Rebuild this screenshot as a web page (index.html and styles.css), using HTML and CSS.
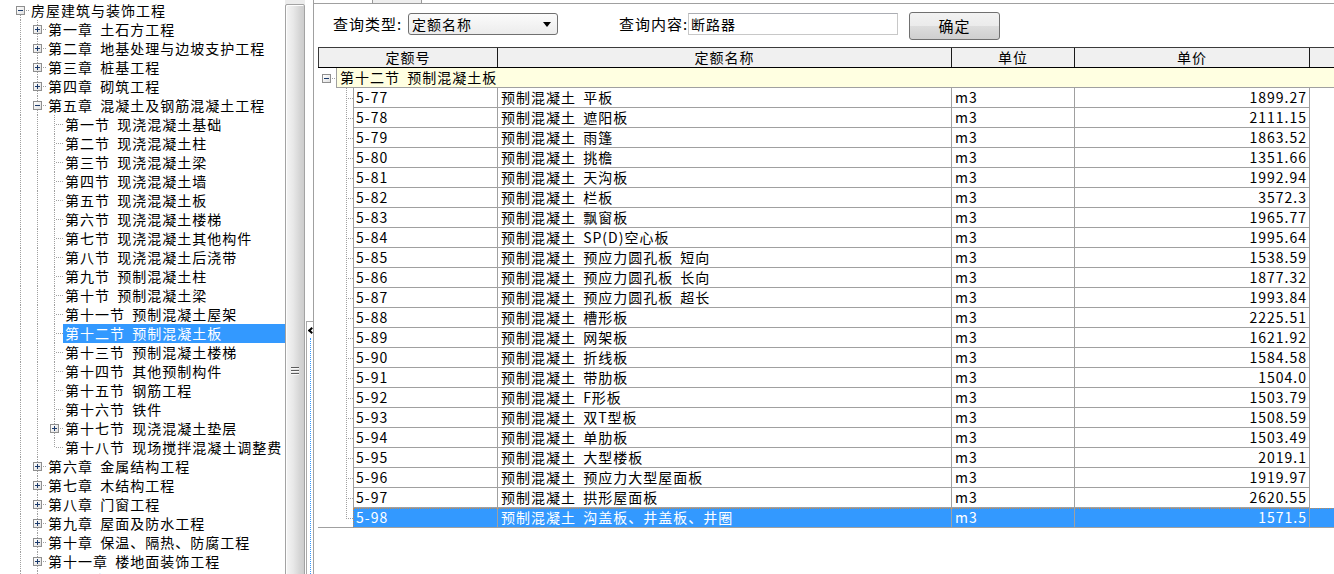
FILE: index.html
```html
<!DOCTYPE html>
<html lang="zh-CN">
<head>
<meta charset="utf-8">
<title>定额查询</title>
<link rel="stylesheet" href="styles.css">
</head>
<body>
<div class="app">
  <aside class="left">
    <div class="tree">
      <div class="row"><span class="ind root"><i class="exp minus"></i></span><span class="lbl">房屋建筑与装饰工程</span></div>
      <div class="row"><span class="ind v"></span><span class="ind tee"><i class="exp plus"></i></span><span class="lbl">第一章 土石方工程</span></div>
      <div class="row"><span class="ind v"></span><span class="ind tee"><i class="exp plus"></i></span><span class="lbl">第二章 地基处理与边坡支护工程</span></div>
      <div class="row"><span class="ind v"></span><span class="ind tee"><i class="exp plus"></i></span><span class="lbl">第三章 桩基工程</span></div>
      <div class="row"><span class="ind v"></span><span class="ind tee"><i class="exp plus"></i></span><span class="lbl">第四章 砌筑工程</span></div>
      <div class="row"><span class="ind v"></span><span class="ind tee"><i class="exp minus"></i></span><span class="lbl">第五章 混凝土及钢筋混凝土工程</span></div>
      <div class="row"><span class="ind v"></span><span class="ind v"></span><span class="ind tee"></span><span class="lbl">第一节 现浇混凝土基础</span></div>
      <div class="row"><span class="ind v"></span><span class="ind v"></span><span class="ind tee"></span><span class="lbl">第二节 现浇混凝土柱</span></div>
      <div class="row"><span class="ind v"></span><span class="ind v"></span><span class="ind tee"></span><span class="lbl">第三节 现浇混凝土梁</span></div>
      <div class="row"><span class="ind v"></span><span class="ind v"></span><span class="ind tee"></span><span class="lbl">第四节 现浇混凝土墙</span></div>
      <div class="row"><span class="ind v"></span><span class="ind v"></span><span class="ind tee"></span><span class="lbl">第五节 现浇混凝土板</span></div>
      <div class="row"><span class="ind v"></span><span class="ind v"></span><span class="ind tee"></span><span class="lbl">第六节 现浇混凝土楼梯</span></div>
      <div class="row"><span class="ind v"></span><span class="ind v"></span><span class="ind tee"></span><span class="lbl">第七节 现浇混凝土其他构件</span></div>
      <div class="row"><span class="ind v"></span><span class="ind v"></span><span class="ind tee"></span><span class="lbl">第八节 现浇混凝土后浇带</span></div>
      <div class="row"><span class="ind v"></span><span class="ind v"></span><span class="ind tee"></span><span class="lbl">第九节 预制混凝土柱</span></div>
      <div class="row"><span class="ind v"></span><span class="ind v"></span><span class="ind tee"></span><span class="lbl">第十节 预制混凝土梁</span></div>
      <div class="row"><span class="ind v"></span><span class="ind v"></span><span class="ind tee"></span><span class="lbl">第十一节 预制混凝土屋架</span></div>
      <div class="row sel"><span class="ind v"></span><span class="ind v"></span><span class="ind tee"></span><span class="lbl">第十二节 预制混凝土板</span></div>
      <div class="row"><span class="ind v"></span><span class="ind v"></span><span class="ind tee"></span><span class="lbl">第十三节 预制混凝土楼梯</span></div>
      <div class="row"><span class="ind v"></span><span class="ind v"></span><span class="ind tee"></span><span class="lbl">第十四节 其他预制构件</span></div>
      <div class="row"><span class="ind v"></span><span class="ind v"></span><span class="ind tee"></span><span class="lbl">第十五节 钢筋工程</span></div>
      <div class="row"><span class="ind v"></span><span class="ind v"></span><span class="ind tee"></span><span class="lbl">第十六节 铁件</span></div>
      <div class="row"><span class="ind v"></span><span class="ind v"></span><span class="ind tee"><i class="exp plus"></i></span><span class="lbl">第十七节 现浇混凝土垫层</span></div>
      <div class="row"><span class="ind v"></span><span class="ind v"></span><span class="ind elbow"></span><span class="lbl">第十八节 现场搅拌混凝土调整费</span></div>
      <div class="row"><span class="ind v"></span><span class="ind tee"><i class="exp plus"></i></span><span class="lbl">第六章 金属结构工程</span></div>
      <div class="row"><span class="ind v"></span><span class="ind tee"><i class="exp plus"></i></span><span class="lbl">第七章 木结构工程</span></div>
      <div class="row"><span class="ind v"></span><span class="ind tee"><i class="exp plus"></i></span><span class="lbl">第八章 门窗工程</span></div>
      <div class="row"><span class="ind v"></span><span class="ind tee"><i class="exp plus"></i></span><span class="lbl">第九章 屋面及防水工程</span></div>
      <div class="row"><span class="ind v"></span><span class="ind tee"><i class="exp plus"></i></span><span class="lbl">第十章 保温、隔热、防腐工程</span></div>
      <div class="row"><span class="ind v"></span><span class="ind tee"><i class="exp plus"></i></span><span class="lbl">第十一章 楼地面装饰工程</span></div>
      <div class="row"><span class="ind v"></span><span class="ind tee"><i class="exp plus"></i></span><span class="lbl">第十二章 墙、柱面装饰与隔断、幕墙工程</span></div>
    </div>
    <div class="vscroll"><div class="thumb"><span class="grip"></span></div></div>
  </aside>

  <div class="splitter"><div class="collapse"><span class="chev"></span><span class="dots"></span></div></div>

  <main class="right">
    <div class="topline"><span class="tabstub"></span></div>
    <div class="query">
      <span class="qlabel q1">查询类型:</span>
      <div class="combo"><span class="combo-text">定额名称</span><span class="arrow"></span></div>
      <span class="qlabel q2">查询内容:</span>
      <div class="input">断路器</div>
      <button class="btn">确定</button>
    </div>

    <div class="grid">
      <div class="ghead">
        <div class="hc first">定额号</div>
        <div class="hc">定额名称</div>
        <div class="hc">单位</div>
        <div class="hc">单价</div>
        <div class="hc last"></div>
      </div>
      <div class="grp"><span class="gind"><i class="exp minus"></i></span><span class="gcell">第十二节 预制混凝土板</span></div>

      <div class="dr"><span class="dind"></span><span class="c c1">5-77</span><span class="c c2">预制混凝土 平板</span><span class="c c3">m3</span><span class="c c4">1899.27</span><span class="c5"></span></div>
      <div class="dr"><span class="dind"></span><span class="c c1">5-78</span><span class="c c2">预制混凝土 遮阳板</span><span class="c c3">m3</span><span class="c c4">2111.15</span><span class="c5"></span></div>
      <div class="dr"><span class="dind"></span><span class="c c1">5-79</span><span class="c c2">预制混凝土 雨篷</span><span class="c c3">m3</span><span class="c c4">1863.52</span><span class="c5"></span></div>
      <div class="dr"><span class="dind"></span><span class="c c1">5-80</span><span class="c c2">预制混凝土 挑檐</span><span class="c c3">m3</span><span class="c c4">1351.66</span><span class="c5"></span></div>
      <div class="dr"><span class="dind"></span><span class="c c1">5-81</span><span class="c c2">预制混凝土 天沟板</span><span class="c c3">m3</span><span class="c c4">1992.94</span><span class="c5"></span></div>
      <div class="dr"><span class="dind"></span><span class="c c1">5-82</span><span class="c c2">预制混凝土 栏板</span><span class="c c3">m3</span><span class="c c4">3572.3</span><span class="c5"></span></div>
      <div class="dr"><span class="dind"></span><span class="c c1">5-83</span><span class="c c2">预制混凝土 飘窗板</span><span class="c c3">m3</span><span class="c c4">1965.77</span><span class="c5"></span></div>
      <div class="dr"><span class="dind"></span><span class="c c1">5-84</span><span class="c c2">预制混凝土 SP(D)空心板</span><span class="c c3">m3</span><span class="c c4">1995.64</span><span class="c5"></span></div>
      <div class="dr"><span class="dind"></span><span class="c c1">5-85</span><span class="c c2">预制混凝土 预应力圆孔板 短向</span><span class="c c3">m3</span><span class="c c4">1538.59</span><span class="c5"></span></div>
      <div class="dr"><span class="dind"></span><span class="c c1">5-86</span><span class="c c2">预制混凝土 预应力圆孔板 长向</span><span class="c c3">m3</span><span class="c c4">1877.32</span><span class="c5"></span></div>
      <div class="dr"><span class="dind"></span><span class="c c1">5-87</span><span class="c c2">预制混凝土 预应力圆孔板 超长</span><span class="c c3">m3</span><span class="c c4">1993.84</span><span class="c5"></span></div>
      <div class="dr"><span class="dind"></span><span class="c c1">5-88</span><span class="c c2">预制混凝土 槽形板</span><span class="c c3">m3</span><span class="c c4">2225.51</span><span class="c5"></span></div>
      <div class="dr"><span class="dind"></span><span class="c c1">5-89</span><span class="c c2">预制混凝土 网架板</span><span class="c c3">m3</span><span class="c c4">1621.92</span><span class="c5"></span></div>
      <div class="dr"><span class="dind"></span><span class="c c1">5-90</span><span class="c c2">预制混凝土 折线板</span><span class="c c3">m3</span><span class="c c4">1584.58</span><span class="c5"></span></div>
      <div class="dr"><span class="dind"></span><span class="c c1">5-91</span><span class="c c2">预制混凝土 带肋板</span><span class="c c3">m3</span><span class="c c4">1504.0</span><span class="c5"></span></div>
      <div class="dr"><span class="dind"></span><span class="c c1">5-92</span><span class="c c2">预制混凝土 F形板</span><span class="c c3">m3</span><span class="c c4">1503.79</span><span class="c5"></span></div>
      <div class="dr"><span class="dind"></span><span class="c c1">5-93</span><span class="c c2">预制混凝土 双T型板</span><span class="c c3">m3</span><span class="c c4">1508.59</span><span class="c5"></span></div>
      <div class="dr"><span class="dind"></span><span class="c c1">5-94</span><span class="c c2">预制混凝土 单肋板</span><span class="c c3">m3</span><span class="c c4">1503.49</span><span class="c5"></span></div>
      <div class="dr"><span class="dind"></span><span class="c c1">5-95</span><span class="c c2">预制混凝土 大型楼板</span><span class="c c3">m3</span><span class="c c4">2019.1</span><span class="c5"></span></div>
      <div class="dr"><span class="dind"></span><span class="c c1">5-96</span><span class="c c2">预制混凝土 预应力大型屋面板</span><span class="c c3">m3</span><span class="c c4">1919.97</span><span class="c5"></span></div>
      <div class="dr"><span class="dind"></span><span class="c c1">5-97</span><span class="c c2">预制混凝土 拱形屋面板</span><span class="c c3">m3</span><span class="c c4">2620.55</span><span class="c5"></span></div>
      <div class="dr sel last"><span class="dind"></span><span class="c c1">5-98</span><span class="c c2">预制混凝土 沟盖板、井盖板、井圈</span><span class="c c3">m3</span><span class="c c4">1571.5</span><span class="c5"></span></div>
    </div>
  </main>
</div>
</body>
</html>
```

FILE: styles.css
```css
* { box-sizing: border-box; }
html, body { margin: 0; padding: 0; }
body {
  font-family: "Noto Sans CJK SC", "Noto Sans", sans-serif;
  font-size: 14px;
  letter-spacing: 1px;
  word-spacing: 3px;
  color: #000;
  background: #fff;
  overflow: hidden;
}
.app { display: flex; width: 1334px; height: 574px; overflow: hidden; }

/* ---------- left tree ---------- */
.left { display: flex; width: 305px; flex: none; height: 574px; }
.tree { width: 285px; flex: none; padding: 1px 0 0 12px; overflow: hidden; }
.row { display: flex; height: 19px; }
.ind { flex: none; width: 17px; height: 19px; display: grid; place-items: center; }
.v {
  background: repeating-linear-gradient(to bottom, #a0a0a0 0 1px, transparent 1px 2px) 8px 0 / 1px 100% no-repeat;
}
.tee {
  background:
    repeating-linear-gradient(to bottom, #a0a0a0 0 1px, transparent 1px 2px) 8px 0 / 1px 100% no-repeat,
    repeating-linear-gradient(to right, #a0a0a0 0 1px, transparent 1px 2px) 10px 9px / 7px 1px no-repeat;
}
.elbow {
  background:
    repeating-linear-gradient(to bottom, #a0a0a0 0 1px, transparent 1px 2px) 8px 0 / 1px 10px no-repeat,
    repeating-linear-gradient(to right, #a0a0a0 0 1px, transparent 1px 2px) 10px 9px / 7px 1px no-repeat;
}
.root {
  background:
    repeating-linear-gradient(to bottom, #a0a0a0 0 1px, transparent 1px 2px) 8px 10px / 1px 9px no-repeat,
    repeating-linear-gradient(to right, #a0a0a0 0 1px, transparent 1px 2px) 10px 9px / 7px 1px no-repeat;
}
.exp {
  display: block;
  width: 9px; height: 9px;
  border: 1px solid #8f8f8f;
  background: linear-gradient(135deg, #ffffff 0%, #e4e4e4 100%);
}
.exp.minus {
  background:
    linear-gradient(#1b3a6b, #1b3a6b) center / 5px 1px no-repeat,
    linear-gradient(135deg, #ffffff 0%, #e0e0e0 100%);
}
.exp.plus {
  background:
    linear-gradient(#1b3a6b, #1b3a6b) center / 5px 1px no-repeat,
    linear-gradient(#1b3a6b, #1b3a6b) center / 1px 5px no-repeat,
    linear-gradient(135deg, #ffffff 0%, #e0e0e0 100%);
}
.lbl {
  flex: 1;
  min-width: 0;
  padding-left: 2px;
  line-height: 19px;
  white-space: nowrap;
  overflow: hidden;
}
.row.sel .lbl { background: #3399ff; color: #fff; }

/* scrollbar */
.vscroll {
  width: 20px; flex: none;
  background: #ececec;
  padding: 4px 0 0 0;
}
.thumb {
  height: 600px;
  border: 1px solid #a3a3a3;
  border-radius: 2px;
  background: linear-gradient(to right, #f5f5f5 0%, #e8e8e8 40%, #d6d6d6 75%, #cdcdcd 100%);
  box-shadow: inset 1px 1px 0 #fdfdfd;
  display: flex;
  flex-direction: column;
  align-items: center;
  padding-top: 362px;
}
.grip {
  width: 8px; height: 9px;
  background: repeating-linear-gradient(to bottom, #5c5c5c 0 1px, #f8f8f8 1px 2px, transparent 2px 3px);
}

/* splitter */
.splitter { width: 8px; flex: none; padding-top: 321px; }
.collapse {
  margin-left: 1px;
  height: 100%;
  border-left: 1px solid #a8a8a8;
  border-top: 1px solid #a8a8a8;
  display: flex;
  flex-direction: column;
  align-items: center;
}
.chev {
  width: 5px; height: 5px;
  margin-top: 6px;
  margin-left: 2px;
  border-left: 2px solid #000;
  border-bottom: 2px solid #000;
  transform: rotate(45deg);
}
.dots {
  flex: 1;
  width: 1px;
  margin-top: 5px;
  border-left: 1px dotted #3399ff;
}

/* ---------- right panel ---------- */
.right {
  flex: 1;
  min-width: 0;
  border-left: 1px solid #a0a0a0;
  display: flex;
  flex-direction: column;
}
.topline { height: 4px; border-bottom: 1px solid #a0a0a0; display: flex; flex: none; }
.tabstub {
  margin-left: 58px;
  width: 50px;
  height: 4px;
  border: 1px solid #9a9a9a;
  border-top: none;
  background: #eeeeee;
}
.query {
  height: 43px;
  flex: none;
  display: flex;
  align-items: flex-start;
  padding: 9px 0 0 19px;
}
.qlabel { font-size: 15px; line-height: 22px; white-space: nowrap; flex: none; }
.q1 { width: 75px; }
.q2 { width: 69px; margin-left: 61px; }
.combo {
  width: 150px; height: 22px; flex: none;
  border: 1px solid #707070;
  border-radius: 3px;
  background: linear-gradient(#fbfbfb, #ececec);
  display: flex;
  align-items: center;
  justify-content: space-between;
  padding: 0 6px 0 3px;
}
.combo-text { line-height: 20px; }
.arrow {
  width: 0; height: 0;
  border-left: 4px solid transparent;
  border-right: 4px solid transparent;
  border-top: 5px solid #000;
}
.input {
  width: 210px; height: 22px; flex: none;
  border: 1px solid #c8c8c8;
  border-top-color: #abadb3;
  background: #fff;
  line-height: 20px;
  padding-left: 2px;
}
.btn {
  margin: -1px 0 0 11px;
  width: 91px; height: 28px; flex: none;
  border: 1px solid #707070;
  border-radius: 3px;
  background: linear-gradient(#f2f2f2 0%, #ebebeb 50%, #dddddd 50%, #cfcfcf 100%);
  font-family: inherit;
  font-size: 15px;
  letter-spacing: 1px;
  color: #000;
  padding: 0;
  line-height: 26px;
}

/* ---------- grid ---------- */
.grid { margin-left: 4px; display: flex; flex-direction: column; }
.ghead {
  display: grid;
  grid-template-columns: 180px 454px 123px 235px 1fr;
  height: 21px;
  background: #f0f0f0;
  border-top: 1px solid #3a3a3a;
  border-bottom: 1px solid #000;
}
.hc {
  border-right: 1px solid #1a1a1a;
  text-align: center;
  line-height: 19px;
  white-space: nowrap;
}
.hc.first { border-left: 1px solid #3a3a3a; }
.hc.last { border-right: none; }

.grp { display: flex; height: 20px; }
.gind {
  width: 18px; flex: none;
  display: flex;
  align-items: center;
  padding-left: 4px;
  background: repeating-linear-gradient(to right, #a0a0a0 0 1px, transparent 1px 2px) 14px 10px / 4px 1px no-repeat;
}
.gcell {
  flex: 1;
  background: #ffffe1;
  border-left: 1px solid #a0a0a0;
  border-bottom: 1px solid #a0a0a0;
  padding-left: 3px;
  line-height: 19px;
  white-space: nowrap;
}

.dr {
  display: grid;
  grid-template-columns: 35px 145px 454px 123px 235px 1fr;
  height: 20px;
}
.dind {
  background:
    repeating-linear-gradient(to bottom, #a0a0a0 0 1px, transparent 1px 2px) 28px 0 / 1px 100% no-repeat,
    repeating-linear-gradient(to right, #a0a0a0 0 1px, transparent 1px 2px) 30px 10px / 5px 1px no-repeat;
}
.dr.last .dind {
  background:
    repeating-linear-gradient(to bottom, #a0a0a0 0 1px, transparent 1px 2px) 28px 0 / 1px 11px no-repeat,
    repeating-linear-gradient(to right, #a0a0a0 0 1px, transparent 1px 2px) 30px 10px / 5px 1px no-repeat;
  border-bottom: 1px solid #a0a0a0;
}
.c {
  border-right: 1px solid #a0a0a0;
  border-bottom: 1px solid #a0a0a0;
  line-height: 19px;
  padding-left: 3px;
  white-space: nowrap;
  overflow: hidden;
}
.c1 { border-left: 1px solid #a0a0a0; padding-left: 2px; }
.c4 { text-align: right; padding-left: 0; padding-right: 2px; }
.dr.last .c5 { border-bottom: 1px solid #a0a0a0; }

.dr.sel .c,
.dr.sel .c5 {
  color: #fff;
  background:
    repeating-linear-gradient(to right, #c98a4b 0 1px, transparent 1px 2px) 0 0 / 100% 1px no-repeat,
    #3399ff;
}
.dr.sel .c1 { border-left: 1px dotted #c98a4b; }
```
